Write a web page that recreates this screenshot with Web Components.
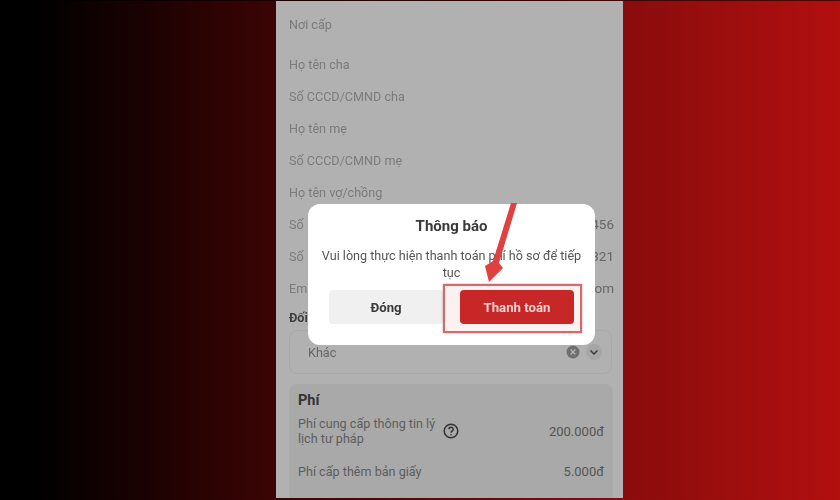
<!DOCTYPE html>
<html lang="vi">
<head>
<meta charset="utf-8">
<title>Thông báo</title>
<style>
	html, body { margin: 0; height: 100%; }
	body { background: #000; font-family: Roboto, "Noto Sans", "Liberation Sans", sans-serif; }
</style>
</head>
<body>
<app-stage>
	<phone-screen>
		<form-row tall label="Nơi cấp"></form-row>
		<form-row label="Họ tên cha"></form-row>
		<form-row label="Số CCCD/CMND cha"></form-row>
		<form-row label="Họ tên mẹ"></form-row>
		<form-row label="Số CCCD/CMND mẹ"></form-row>
		<form-row label="Họ tên vợ/chồng"></form-row>
		<form-row label="Số" value="456"></form-row>
		<form-row label="Số" value="321"></form-row>
		<form-row label="Em" value="om"></form-row>
		<select-field label="Đối" value="Khác"></select-field>
		<fee-card>
			<fee-row value="200.000đ" help>Phí cung cấp thông tin lý<br>lịch tư pháp</fee-row>
			<fee-row value="5.000đ">Phí cấp thêm bản giấy</fee-row>
			<fee-row value="205.000đ" total>Tổng</fee-row>
		</fee-card>
		<notice-dialog slot="overlay" title="Thông báo" cancel="Đóng" confirm="Thanh toán">
			Vui lòng thực hiện thanh toán phí hồ sơ để tiếp tục
		</notice-dialog>
	</phone-screen>
</app-stage>

<script>
	// Page background with the phone column on it
	customElements.define(
		'app-stage',
		class extends HTMLElement {
			constructor() {
				super();
				this.attachShadow({ mode: 'open' }).innerHTML = `
					<style>
						:host {
							display: flex;
							box-sizing: border-box;
							width: 840px;
							height: 500px;
							padding: 0 0 1px 276px;
							overflow: hidden;
							background: linear-gradient(90deg, #000 4%, #3c0404 33%, #8a0c0c 75%, #b20f0f 100%);
							border-top: 1px solid rgba(0, 0, 0, .55);
						}
					</style>
					<slot></slot>
				`;
			}
		},
	);

	customElements.define(
		'phone-screen',
		class extends HTMLElement {
			constructor() {
				super();
				this.attachShadow({ mode: 'open' }).innerHTML = `
					<style>
						:host {
							position: relative;
							display: flex;
							flex-direction: column;
							flex: none;
							box-sizing: border-box;
							width: 347px;
							height: 497px;
							padding: 0 10px 0 13px;
							overflow: hidden;
							background: #b1b1b1;
							color: #7b7b7b;
							font-size: 12.6px;
						}
						.content { filter: blur(.5px); display: flex; flex-direction: column; }
					</style>
					<div class="content"><slot></slot></div>
					<slot name="overlay"></slot>
				`;
			}
		},
	);

	customElements.define(
		'form-row',
		class extends HTMLElement {
			constructor() {
				super();
				this.attachShadow({ mode: 'open' }).innerHTML = `
					<style>
						:host {
							display: flex;
							align-items: center;
							justify-content: space-between;
							height: 32px;
						}
						:host([tall]) { height: 47px; }
						.value { color: #666; font-size: 13.5px; margin-right: -1px; }
					</style>
					<span class="label"></span><span class="value"></span>
				`;
			}
			connectedCallback() {
				this.shadowRoot.querySelector('.label').textContent = this.getAttribute('label');
				this.shadowRoot.querySelector('.value').textContent = this.getAttribute('value') || '';
			}
		},
	);

	customElements.define(
		'select-field',
		class extends HTMLElement {
			constructor() {
				super();
				this.attachShadow({ mode: 'open' }).innerHTML = `
					<style>
						:host { display: block; }
						.label {
							height: 26px;
							line-height: 27px;
							color: #3f3f3f;
							font-weight: 700;
						}
						.box {
							display: flex;
							align-items: center;
							box-sizing: border-box;
							height: 44px;
							margin-right: 1px;
							padding: 0 9px 0 18px;
							border: 1px solid #a9a9a9;
							border-radius: 8px;
							color: #666;
						}
						.text { flex: 1; }
						.clear { width: 14px; height: 14px; margin-right: 6px; }
						.open {
							display: flex;
							align-items: center;
							justify-content: center;
							width: 16px;
							height: 16px;
							border-radius: 50%;
							background: #a6a6a6;
						}
						svg { display: block; }
					</style>
					<div class="label"></div>
					<div class="box">
						<span class="text"></span>
						<svg class="clear" viewBox="0 0 14 14">
							<circle cx="7" cy="7" r="6.5" fill="#6f6f6f"/>
							<path d="M4.6 4.6l4.8 4.8M9.4 4.6l-4.8 4.8" stroke="#b1b1b1" stroke-width="1.4" fill="none"/>
						</svg>
						<span class="open">
							<svg width="10" height="10" viewBox="0 0 10 10">
								<path d="M1.5 3.5L5 7l3.5-3.5" stroke="#3c3c3c" stroke-width="1.5" fill="none"/>
							</svg>
						</span>
					</div>
				`;
			}
			connectedCallback() {
				this.shadowRoot.querySelector('.label').textContent = this.getAttribute('label');
				this.shadowRoot.querySelector('.text').textContent = this.getAttribute('value');
			}
		},
	);

	customElements.define(
		'fee-card',
		class extends HTMLElement {
			constructor() {
				super();
				this.attachShadow({ mode: 'open' }).innerHTML = `
					<style>
						:host {
							display: block;
							margin-top: 10px;
							padding: 8px 9px 0;
							border-radius: 8px;
							background: #a9a9a9;
						}
						h3 {
							margin: 0 0 6px;
							height: 18px;
							line-height: 18px;
							font-size: 14.5px;
							font-weight: 700;
							color: #333;
						}
					</style>
					<h3>Phí</h3>
					<slot></slot>
				`;
			}
		},
	);

	customElements.define(
		'fee-row',
		class extends HTMLElement {
			constructor() {
				super();
				this.attachShadow({ mode: 'open' }).innerHTML = `
					<style>
						:host {
							display: flex;
							align-items: center;
							margin-bottom: 18px;
							min-height: 15px;
							line-height: 15px;
							color: #5d5d5d;
							font-size: 12.6px;
						}
						.name { flex: none; }
						svg { display: block; flex: none; margin-left: 8px; }
						.value { margin-left: auto; color: #555; font-size: 13px; }
						:host([total]) .value { color: #b83030; font-weight: 600; }
					</style>
					<span class="name"><slot></slot></span>
					<span class="value"></span>
				`;
			}
			connectedCallback() {
				this.shadowRoot.querySelector('.value').textContent = this.getAttribute('value');
				if (this.hasAttribute('help')) {
					this.shadowRoot.querySelector('.name').insertAdjacentHTML('afterend', `
						<svg width="16" height="16" viewBox="0 0 16 16" fill="none" stroke="#333" stroke-width="1.5">
							<circle cx="8" cy="8" r="6.8"/>
							<path d="M5.9 6.3a2.1 2.1 0 1 1 3.3 1.7c-.8.5-1.2.9-1.2 1.7"/>
							<circle cx="8" cy="11.7" r=".5" fill="#333" stroke-width=".6"/>
						</svg>
					`);
				}
			}
		},
	);

	// Dialog over the dimmed form, with the red arrow and box drawn on the screenshot
	customElements.define(
		'notice-dialog',
		class extends HTMLElement {
			constructor() {
				super();
				this.attachShadow({ mode: 'open' }).innerHTML = `
					<style>
						:host {
							position: absolute;
							left: 32px;
							top: 203px;
							box-sizing: border-box;
							display: flex;
							flex-direction: column;
							width: 287px;
							height: 141px;
							padding: 12px 21px 0;
							border-radius: 12px;
							background: #fff;
							filter: blur(.4px);
						}
						h2 {
							margin: 0;
							text-align: center;
							font-size: 15px;
							line-height: 20px;
							font-weight: 700;
							color: #3a3a3a;
						}
						p {
							margin: 11px -10px 0;
							text-align: center;
							font-size: 12.6px;
							line-height: 17px;
							color: #555;
						}
						.actions {
							display: flex;
							gap: 17px;
							margin-top: 9px;
						}
						button {
							flex: 1;
							height: 34px;
							padding: 0;
							border: 0;
							border-radius: 4px;
							font: 700 13.2px Roboto, "Noto Sans", "Liberation Sans", sans-serif;
							background: #f0f0f0;
							color: #3a3a3a;
						}
						button.pay { background: #c41f1f; color: #f6dcdc; }
						.mark {
							position: absolute;
							left: 135px;
							top: 80px;
							width: 135px;
							height: 45px;
							border: 2px solid #d46a69;
							background: rgba(230, 120, 120, .1);
							box-shadow: 0 0 2px rgba(120, 60, 60, .5);
						}
						.arrow { position: absolute; left: 165px; top: -5px; overflow: visible; }
					</style>
					<h2></h2>
					<p><slot></slot></p>
					<div class="actions">
						<button class="close"></button>
						<button class="pay"></button>
					</div>
					<div class="mark"></div>
					<svg class="arrow" width="50" height="90" viewBox="0 0 50 90">
						<path d="M38 4H44L26 64L30 69L16 83L12 67L20 62Z" fill="#e04040"/>
					</svg>
				`;
			}
			connectedCallback() {
				this.shadowRoot.querySelector('h2').textContent = this.getAttribute('title');
				this.shadowRoot.querySelector('.close').textContent = this.getAttribute('cancel');
				this.shadowRoot.querySelector('.pay').textContent = this.getAttribute('confirm');
			}
		},
	);
</script>
</body>
</html>
